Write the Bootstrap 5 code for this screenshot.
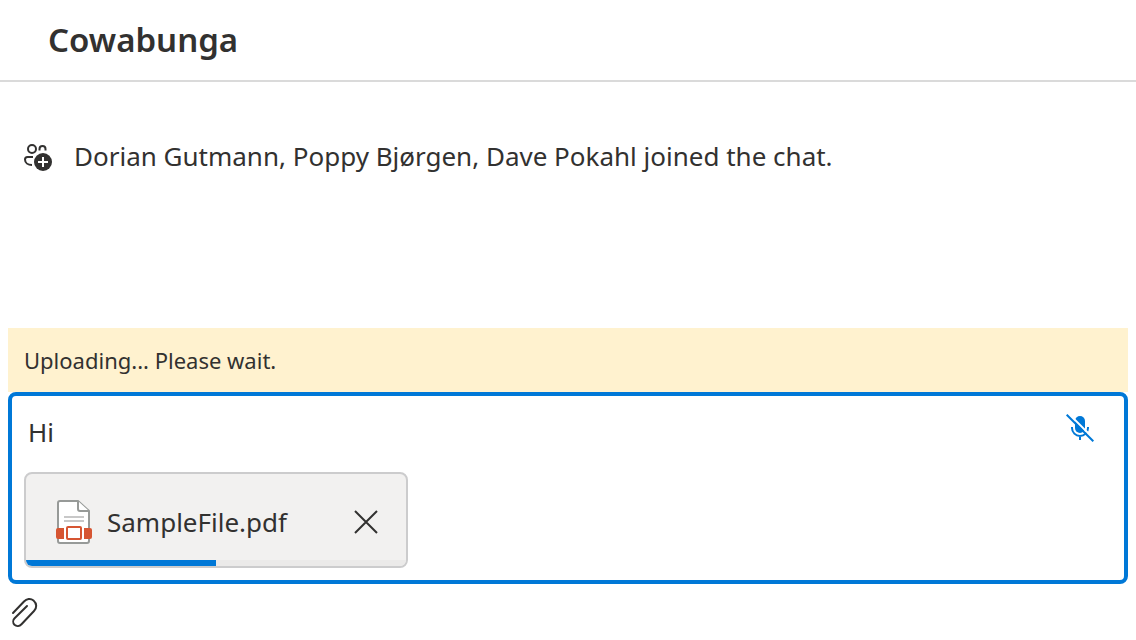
<!DOCTYPE html>
<html lang="en">
<head>
<meta charset="utf-8">
<meta name="viewport" content="width=device-width, initial-scale=1">
<title>Cowabunga</title>
<link href="https://cdn.jsdelivr.net/npm/bootstrap@5.3.0/dist/css/bootstrap.min.css" rel="stylesheet">
<style>
  body { font-family: "Segoe UI", "Noto Sans", "Open Sans", sans-serif; font-size: 26px; line-height: 36px; color: #323130; }
  svg { display: block; flex: none; }
  .chat-header { height: 82px; border-bottom: 2px solid #dadada; }
  .chat-title { font-family: "Segoe UI", "Noto Sans", sans-serif; font-size: 33px; line-height: 48px; font-weight: 600; }
  .chat-log { padding-top: 56px; }
  .chat-event { gap: 21px; }
  .notice { background: #fff2cf; font-size: 22px; line-height: 32px; }
  .composer { border: 4px solid #0078d7; border-radius: 8px; padding: 12px; }
  .message-text { height: 48px; padding: 6px 4px; border: 0; resize: none; outline: 0; background: transparent; color: inherit; line-height: 36px; overflow: hidden; }
  .mic-button { width: 64px; height: 40px; color: #0078d7; }
  .file-card { width: 384px; height: 96px; border: 2px solid #cccccd; border-radius: 8px; background: #f2f1f0; margin-top: 16px; }
  .file-row { padding: 10px 27px 0 28px; gap: 15px; }
  .upload-progress { height: 6px; border-radius: 0; background: #ebeae9; }
  .upload-progress .progress-bar { background: #0078d7; }
  .tools { height: 56px; padding: 0 10px; }
</style>
<script src="https://cdn.jsdelivr.net/npm/bootstrap@5.3.0/dist/js/bootstrap.bundle.min.js" defer></script>
</head>
<body class="bg-white">
<div class="d-flex flex-column min-vh-100">
  <header class="chat-header d-flex align-items-center px-5">
    <h1 class="chat-title m-0">Cowabunga</h1>
  </header>
  <main class="chat-log flex-grow-1 px-4">
    <div class="chat-event d-flex align-items-center">
      <svg width="29" height="32" viewBox="0 -3 29 32" fill="none" stroke="#323130" stroke-width="2" aria-hidden="true">
        <circle cx="8" cy="6" r="4"/>
        <path d="M15.500 7.500V6a3 3 0 0 1 6 0v1.500"/>
        <path d="M9 14H3.500A2.500 2.500 0 0 0 1 16.500C1 20 4 22 8 22"/>
        <circle cx="19" cy="19" r="9" fill="#323130" stroke="none"/>
        <path d="M19 14v10M14 19h10" stroke="#fff"/>
      </svg>
      <p class="m-0">Dorian Gutmann, Poppy Bjørgen, Dave Pokahl joined the chat.</p>
    </div>
  </main>
  <footer class="px-2">
    <div class="notice p-3" role="status">Uploading... Please wait.</div>
    <form class="composer">
      <div class="d-flex align-items-start">
        <textarea class="message-text flex-grow-1" rows="1" aria-label="Message">Hi</textarea>
        <button type="button" class="mic-button btn border-0 p-0 d-flex align-items-center justify-content-center" aria-label="Turn on microphone">
          <svg width="28" height="28" viewBox="0 0 28 28" fill="none" stroke="currentColor" stroke-width="2" aria-hidden="true">
            <rect x="9" y="2" width="10" height="17" rx="5" fill="currentColor" stroke="none"/>
            <path d="M6 13v1a8 8 0 0 0 16 0v-1M14 22v4"/>
            <path d="M2 -1L29 26" stroke="#fff" stroke-width="2"/>
            <path d="M.700 .700L27.300 27.300"/>
          </svg>
        </button>
      </div>
      <div class="file-card d-flex flex-column overflow-hidden">
        <div class="file-row d-flex align-items-center flex-grow-1">
          <svg width="38" height="46" viewBox="0 0 38 46" aria-hidden="true">
            <path d="M6 2h18l11 10v30a2 2 0 0 1-2 2H6a2 2 0 0 1-2-2V4a2 2 0 0 1 2-2z" fill="#fff" stroke="#979a98" stroke-width="2"/>
            <path d="M24 2v8a2 2 0 0 0 2 2h9" fill="#fff" stroke="#979a98" stroke-width="2"/>
            <path d="M10 18h20M10 22h20" stroke="#c8c8c8" stroke-width="2"/>
            <rect x="2" y="29" width="36" height="11" rx="2" fill="#d65532"/>
            <path d="M10 27h20v15H10z" fill="#fff"/>
            <rect x="13" y="28" width="14" height="12" rx="1" fill="#fff" stroke="#d65532" stroke-width="2"/>
          </svg>
          <span class="flex-grow-1">SampleFile.pdf</span>
          <button type="button" class="btn border-0 p-0" aria-label="Remove SampleFile.pdf">
            <svg width="26" height="26" viewBox="0 0 26 26" fill="none" stroke="#323130" stroke-width="2" aria-hidden="true"><path d="M2 2l22 22M24 2L2 24"/></svg>
          </button>
        </div>
        <div class="upload-progress progress" role="progressbar" aria-label="Upload progress" aria-valuenow="50" aria-valuemin="0" aria-valuemax="100">
          <div class="progress-bar" style="width: 50%"></div>
        </div>
      </div>
    </form>
  </footer>
  <div class="tools d-flex align-items-center">
    <button type="button" class="btn border-0 p-0" aria-label="Attach a file">
      <svg width="28" height="32" viewBox="0 0 28 32" fill="none" stroke="#323130" stroke-width="2" stroke-linecap="round" stroke-linejoin="round" aria-hidden="true"><path d="M3 17L14 5.500C16.500 2.800 20.500 2 23.500 4.500C27 7.500 27 12 24 15L11.500 28.200C9.500 30.300 6.500 30.600 4.500 28.800C2.800 27 2.800 24 4.600 22.200L17 10"/></svg>
    </button>
  </div>
</div>
</body>
</html>
